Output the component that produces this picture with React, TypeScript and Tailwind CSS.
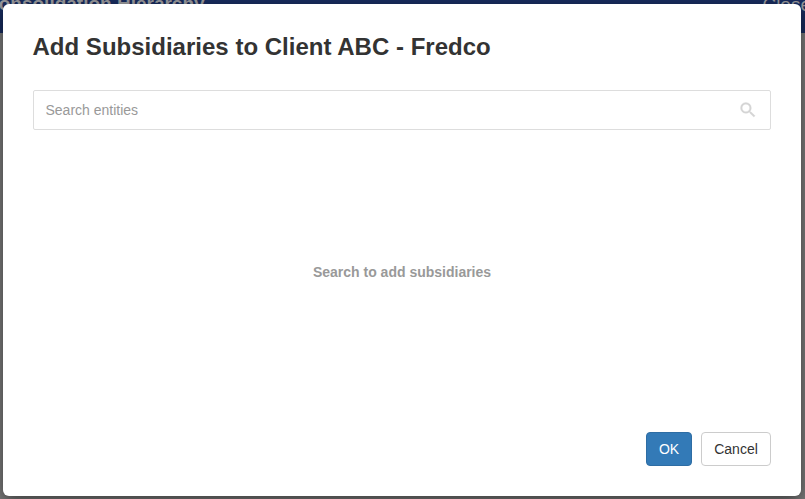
export default function App() {
  return (
    <div className="relative h-[499px] w-[805px] overflow-hidden bg-[#7a7a7a] font-['Liberation_Sans',Arial,sans-serif] text-sm text-[#333]">
      <header className="flex h-[33px] justify-between bg-[#182c5e] text-[#99999c]">
        <span className="-mt-[7px] -ml-[15px] text-[19px] leading-[22px] font-bold whitespace-nowrap">Consolidation Hierarchy</span>
        <span className="-mt-[6px] -mr-[6px] text-[19px] leading-[22px] whitespace-nowrap">Close</span>
      </header>
      <section
        role="dialog"
        className="absolute top-[4px] left-[3px] flex h-[492px] w-[798px] flex-col rounded-[6px] bg-white px-[30px] pt-[28px] pb-[30px] shadow-[0_5px_15px_rgba(0,0,0,0.5)]"
      >
        <h1 className="-ml-[0.5px] text-[24px] leading-[30px] font-bold tracking-[0.01px] whitespace-nowrap">Add Subsidiaries to Client ABC - Fredco</h1>
        <div className="mt-[28px] flex h-[40px] items-center justify-between rounded-[2px] border border-[#ddd] pr-[12px] pl-[11.5px]">
          <input
            className="flex-1 bg-transparent text-sm outline-none placeholder:text-[#999]"
            placeholder="Search entities"
          />
          <svg className="size-5" viewBox="0 0 24 24" fill="#d4d4d4" stroke="#d4d4d4" strokeWidth="0.4">
            <path d="M15.5 14h-.79l-.28-.27A6.47 6.47 0 0 0 16 9.5 6.5 6.5 0 1 0 9.5 16c1.61 0 3.09-.59 4.23-1.57l.27.28v.79l5 4.99L20.49 19l-4.99-5zm-6 0C7.01 14 5 11.99 5 9.5S7.01 5 9.5 5 14 7.01 14 9.5 11.99 14 9.5 14z" />
          </svg>
        </div>
        <div className="flex flex-1 items-center justify-center pb-[18px] font-bold text-[#999]">Search to add subsidiaries</div>
        <footer className="flex justify-end gap-[9px]">
          <button className="h-[34px] w-[46px] rounded-[4px] border border-[#2e6da4] bg-[#337ab7] text-white">OK</button>
          <button className="h-[34px] w-[70px] rounded-[4px] border border-[#ccc] bg-white">Cancel</button>
        </footer>
      </section>
    </div>
  );
}
